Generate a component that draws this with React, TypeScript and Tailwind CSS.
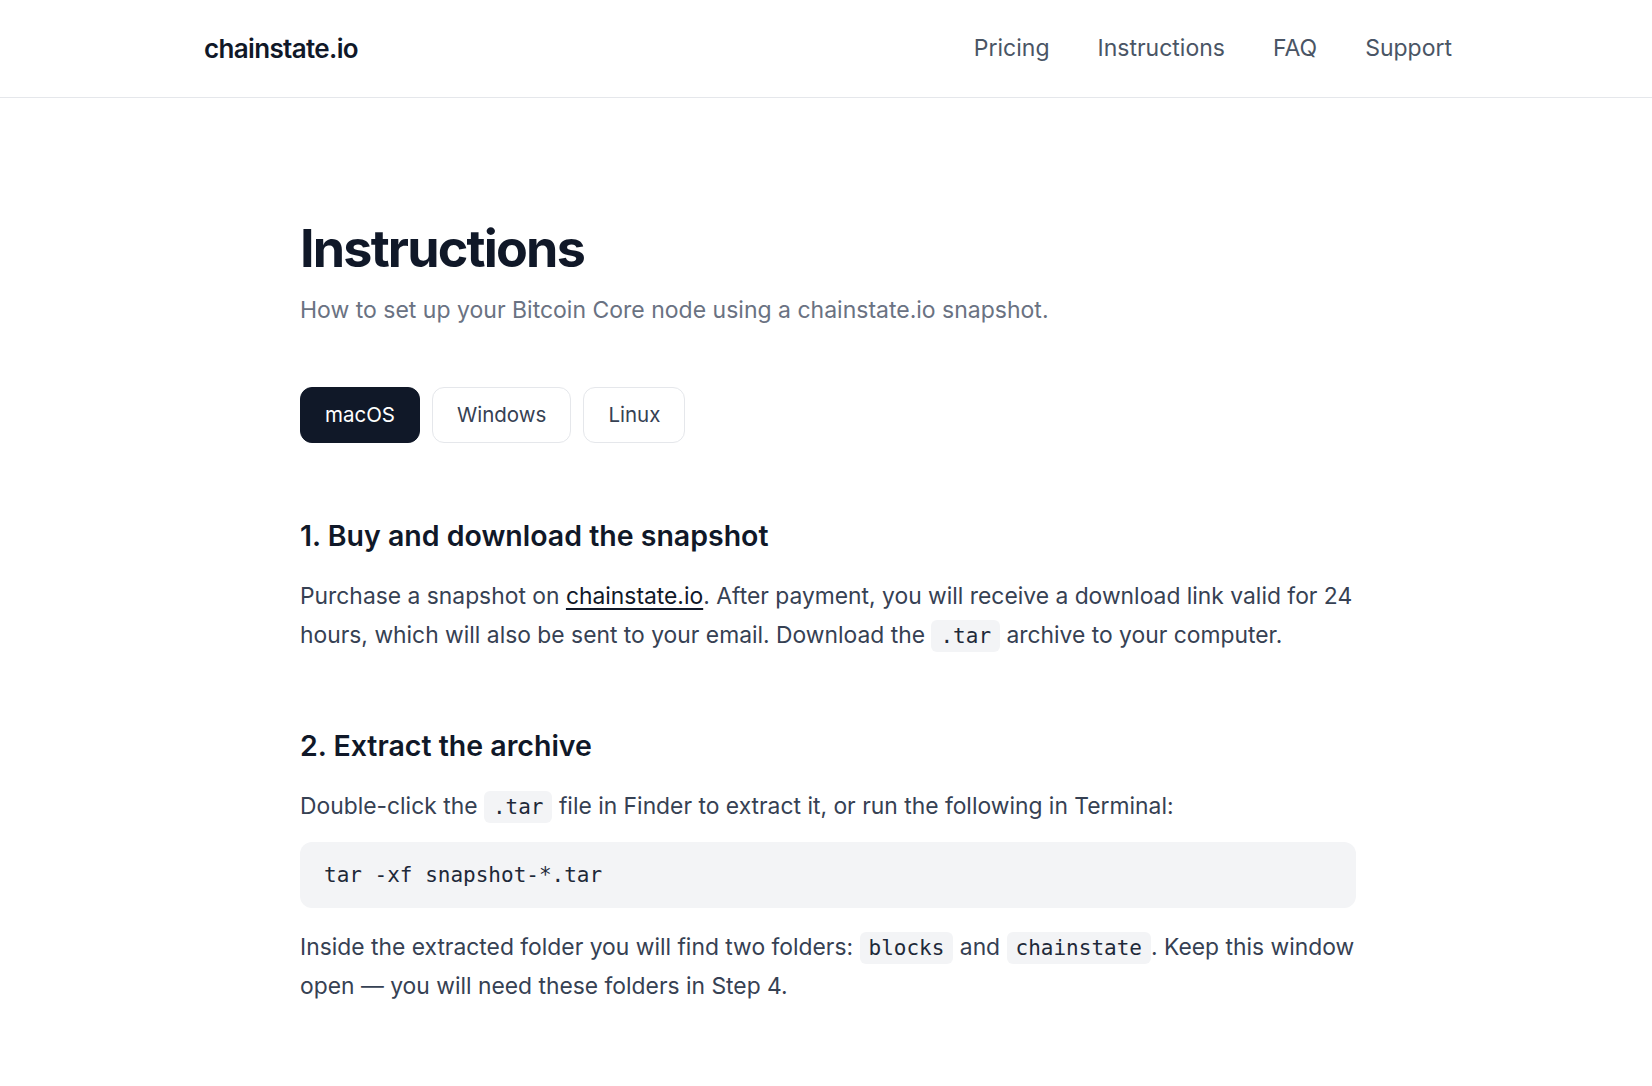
import { useState } from 'react'

const navLinks = ['Pricing', 'Instructions', 'FAQ', 'Support']
const platforms = ['macOS', 'Windows', 'Linux']

function Code({ children }: { children: string }) {
  return (
    <code className="rounded-md bg-gray-100 px-[9px] py-1 font-['DejaVu_Sans_Mono',monospace] text-[21px] leading-none text-gray-800">
      {children}
    </code>
  )
}

function Step({ title, className, children }: { title: string; className: string; children: React.ReactNode }) {
  return (
    <section className={className}>
      <h2 className="text-[28.5px] font-semibold leading-[36px] text-gray-900">{title}</h2>
      <div className="mt-[23px]">{children}</div>
    </section>
  )
}

export default function App() {
  const [platform, setPlatform] = useState('macOS')

  return (
    <div className="min-h-screen bg-white font-['Inter',sans-serif] text-gray-700">
      <header className="border-b border-gray-200">
        <div className="mx-auto flex h-[97px] max-w-[1280px] items-center justify-between pr-[14px] pl-[18px]">
          <a href="#" className="text-[26px] font-semibold tracking-tight text-gray-900">
            chainstate.io
          </a>
          <nav className="flex items-center gap-12">
            {navLinks.map((l) => (
              <a key={l} href="#" className="text-[23px] text-gray-600 hover:text-gray-900">
                {l}
              </a>
            ))}
          </nav>
        </div>
      </header>

      <main className="mx-auto max-w-[1060px] pt-[125px] pr-0 pb-24 pl-1">
        <h1 className="text-[52px] font-bold leading-none tracking-[-0.035em] text-gray-900">Instructions</h1>
        <p className="mt-[19px] text-[23px] leading-[33px] text-gray-500">
          How to set up your Bitcoin Core node using a chainstate.io snapshot.
        </p>

        <div className="mt-[60px] flex gap-3">
          {platforms.map((p) => (
            <button
              key={p}
              type="button"
              onClick={() => setPlatform(p)}
              className={
                p === platform
                  ? 'h-14 rounded-xl border border-gray-900 bg-gray-900 px-6 text-[20.5px] text-white'
                  : 'h-14 rounded-xl border border-gray-200 bg-white px-6 text-[20.5px] text-gray-700 hover:bg-gray-50'
              }
            >
              {p}
            </button>
          ))}
        </div>

        <div className="text-[22.85px] leading-[39px]">
          <Step className="mt-[75px]" title="1. Buy and download the snapshot">
            <p>
              Purchase a snapshot on{' '}
              <a href="#" className="text-gray-900 underline decoration-[1.5px] underline-offset-4">
                chainstate.io
              </a>
              . After payment, you will receive a download link valid for 24 hours, which will also be sent to your
              email. Download the <Code>.tar</Code> archive to your computer.
            </p>
          </Step>

          <Step className="mt-[73px]" title="2. Extract the archive">
            <p>
              Double-click the <Code>.tar</Code> file in Finder to extract it, or run the following in Terminal:
            </p>
            <pre className="mt-4 rounded-xl bg-gray-100 px-6 py-[21px] font-['DejaVu_Sans_Mono',monospace] text-[21px] leading-6 text-gray-800">
              tar -xf snapshot-*.tar
            </pre>
            <p className="mt-5">
              Inside the extracted folder you will find two folders: <Code>blocks</Code> and <Code>chainstate</Code>.
              Keep this window open — you will need these folders in Step 4.
            </p>
          </Step>

          <Step className="mt-[78px]" title="3. Locate your Bitcoin Core data directory">
            <p>
              Make sure Bitcoin Core is not running. Open Finder, press Cmd + Shift + G and go to the Bitcoin data
              directory.
            </p>
          </Step>
        </div>
      </main>
    </div>
  )
}
